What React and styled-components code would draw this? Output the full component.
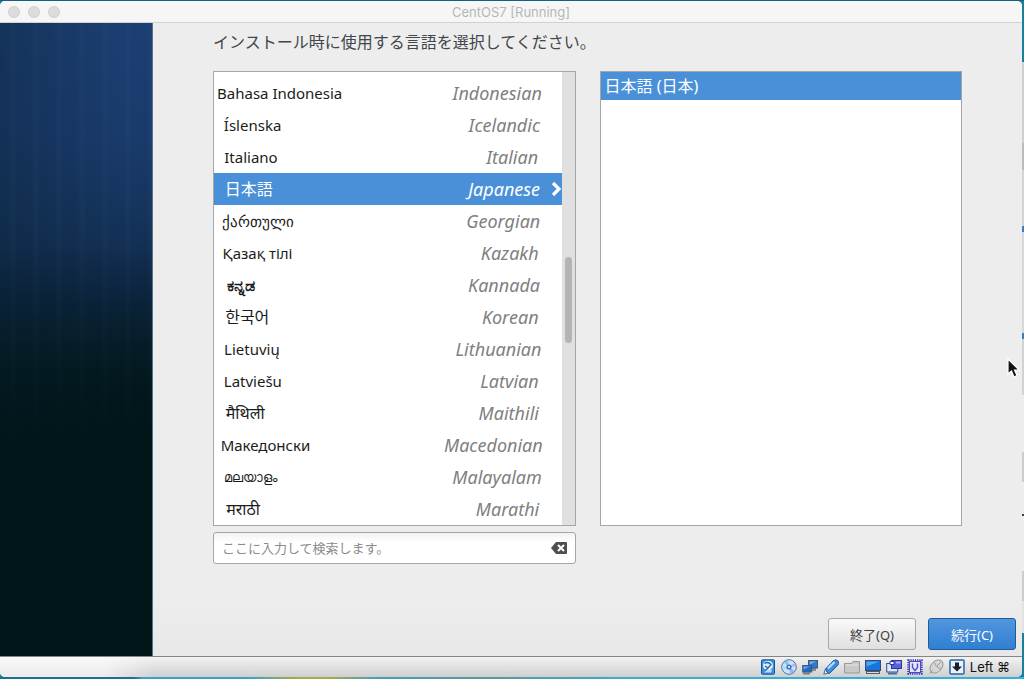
import React from "react";
import styled, { createGlobalStyle, css } from "styled-components";

const GlobalStyle = createGlobalStyle`
  * {
    box-sizing: border-box;
  }

  body {
    margin: 0;
    font-family: "Noto Sans", "Noto Sans CJK JP", sans-serif;
    color: #2e3436;
  }

  button,
  input {
    font-family: inherit;
  }
`;

const Desktop = styled.div`
  display: flex;
  min-height: 100vh;
  padding: 1px 2px 2px 0;
  background:
    linear-gradient(90deg, #1a7090 0 13%, #3aa0cc 14% 24%, #a9a94a 29% 32%, #4a9dbb 37%, #5a9a98 48%, #3fa9d0 60%, #35b0dc)
      bottom left / 100% 2px no-repeat,
    linear-gradient(#15607f, #15607f) top left / 100% 1px no-repeat,
    linear-gradient(#1b7e9c 0 62px, #d0d0d0 62px 143px, #bbb 143px 170px, #d4d4d4 170px 226px, #3d7cc4 226px 232px, #d8d8d8 232px 333px, #3d7cc4 333px 339px, #d2d2d2 339px 395px, #eee 395px 452px, #ccc 452px 482px, #eee 482px 514px, #4a3a2a 514px 516px, #eee 516px 571px, #ccc 571px 601px, #e2e2e2 601px 633px, #1b7e9c 633px);
`;

const Window = styled.div`
  flex: 1;
  display: flex;
  flex-direction: column;
  overflow: hidden;
  border-radius: 5px;
  background: #ededed;
`;

const TitleBar = styled.header`
  display: grid;
  grid-template-columns: 1fr auto 1fr;
  align-items: center;
  height: 22px;
  padding: 0 8px;
  border-bottom: 1px solid #d2d2d2;
  background: #f6f6f6;
`;

const WindowButtons = styled.div`
  display: flex;
  gap: 8px;
`;

const WindowButton = styled.button`
  width: 12px;
  height: 12px;
  padding: 0;
  border: 1px solid #d0d0d0;
  border-radius: 50%;
  background: #dcdcdc;
`;

const Title = styled.h1`
  margin: 0;
  font: 13px/20px Inter, "Liberation Sans", sans-serif;
  color: #b6b6b6;
`;

const Body = styled.div`
  flex: 1;
  display: flex;
`;

const Sidebar = styled.aside`
  flex: 0 0 153px;
  border-right: 1px solid #5d7088;
  background:
    linear-gradient(transparent 35%, #001518 70%),
    repeating-linear-gradient(90deg, transparent 0 9px, rgba(90, 150, 180, 0.04) 12px 14px, transparent 17px 23px),
    linear-gradient(90deg, rgba(10, 35, 55, 0.4), transparent 80%),
    linear-gradient(#1c3e72 0, #1a3a6c 18%, #15345c 30%, #10294a 42%, #0a2233 52%, #031a20 62%, #001518 70%);
`;

const Main = styled.main`
  flex: 1;
  display: flex;
  flex-direction: column;
  min-width: 0;
  background: linear-gradient(#ededed 90%, #e8e8e8);
`;

const Content = styled.section`
  flex: 1;
  display: flex;
  flex-direction: column;
  padding: 7px 60px 0;
`;

const Heading = styled.h2`
  margin: 0 0 17px;
  font-size: 16px;
  font-weight: 400;
  line-height: 24px;
  color: #41474a;
`;

const Columns = styled.div`
  flex: 1;
  display: grid;
  grid-template-columns: 1fr 1fr;
  grid-template-rows: 1fr auto;
  gap: 6px 24px;
`;

const panel = css`
  border: 1px solid #a6a6a6;
  background: #fff;
`;

const LanguagePanel = styled.div`
  ${panel}
  display: flex;
`;

const LanguageList = styled.ul`
  flex: 1;
  display: flex;
  flex-direction: column;
  justify-content: flex-end;
  margin: 0;
  padding: 5px 0 0;
  list-style: none;
`;

const LanguageRow = styled.button`
  display: flex;
  align-items: center;
  width: 100%;
  height: 32px;
  padding: 0;
  border: 0;
  background: ${(props) => (props.$selected ? "#4a90d9" : "transparent")};
  color: ${(props) => (props.$selected ? "#fff" : "#1c1c1c")};
`;

const scripts = {
  latin: "font-size: 15px;",
  cjk: "font-size: 16px;",
  indic: "font-size: 16px;",
  kannada: "font-size: 16px; font-weight: 600;",
  malayalam: "font-size: 13px;",
};

const NativeName = styled.span`
  display: grid;
  grid-template-columns: 1fr auto 9fr;
  width: 156px;
  ${(props) => scripts[props.$script]}
  line-height: 24px;
  white-space: nowrap;

  &::before {
    content: "";
  }
`;

const EnglishName = styled.span`
  display: grid;
  grid-template-columns: 9fr auto 1fr;
  width: 136px;
  margin-left: auto;
  font-size: 18px;
  font-style: italic;
  line-height: 24px;
  color: ${(props) => (props.$selected ? "#fff" : "#808080")};

  &::before {
    content: "";
  }
`;

const Arrow = styled.span`
  display: flex;
  justify-content: flex-end;
  width: 15px;
`;

const ScrollTrack = styled.div`
  display: flex;
  flex-direction: column;
  align-items: center;
  width: 13px;
  background: #e0e0e0;

  &::before {
    content: "";
    flex: 185;
  }

  &::after {
    content: "";
    flex: 182;
  }
`;

const ScrollThumb = styled.div`
  flex: 86;
  width: 7px;
  border-radius: 4px;
  background: #b2b4b5;
`;

const LocalePanel = styled.ul`
  ${panel}
  margin: 0;
  padding: 0;
  list-style: none;
`;

const LocaleRow = styled.button`
  width: 100%;
  height: 28px;
  padding: 0 4px;
  border: 0;
  background: #4a90d9;
  color: #fff;
  font-size: 16px;
  line-height: 24px;
  text-align: left;
`;

const SearchBox = styled.div`
  display: flex;
  align-items: center;
  height: 32px;
  padding: 0 8px;
  border: 1px solid #a6a6a6;
  border-radius: 3px;
  background: linear-gradient(#f2f2f2, #fff 30%);
`;

const SearchInput = styled.input`
  flex: 1;
  min-width: 0;
  padding: 0;
  border: 0;
  outline: 0;
  background: transparent;
  font-size: 13px;

  &::placeholder {
    color: #8b8b8b;
  }
`;

const ClearButton = styled.button`
  display: flex;
  padding: 0;
  border: 0;
  background: transparent;
`;

const Actions = styled.div`
  display: flex;
  justify-content: flex-end;
  gap: 12px;
  padding: 54px 6px 6px;
`;

const ActionButton = styled.button`
  width: 88px;
  height: 32px;
  padding: 0;
  border: 1px solid ${(props) => (props.$primary ? "#1f5a9c" : "#a8a8a8")};
  border-radius: 3px;
  background: ${(props) =>
    props.$primary ? "linear-gradient(#5296de, #2f7fd3)" : "linear-gradient(#fafafa, #dfdfdf)"};
  color: ${(props) => (props.$primary ? "#fff" : "#3c4245")};
  font-size: 13px;
`;

const StatusBar = styled.footer`
  display: flex;
  align-items: center;
  justify-content: flex-end;
  gap: 5px;
  height: 21px;
  padding: 0 12px 0 0;
  border-top: 1px solid #868686;
  background:
    linear-gradient(90deg, rgba(255, 255, 255, 0.6) 10%, transparent 15%),
    linear-gradient(#f2f2f2, #d0d0d0);
`;

const HostKey = styled.span`
  font: 13px/20px Inter, "DejaVu Sans", sans-serif;
  color: #111;
`;

const Pointer = styled.svg`
  position: absolute;
  top: 357px;
  right: 4px;
`;

const languages = [
  ["Bahasa Indonesia", "Indonesian"],
  ["Íslenska", "Icelandic"],
  ["Italiano", "Italian"],
  ["日本語", "Japanese", "cjk"],
  ["ქართული", "Georgian"],
  ["Қазақ тілі", "Kazakh"],
  ["ಕನ್ನಡ", "Kannada", "kannada"],
  ["한국어", "Korean", "cjk"],
  ["Lietuvių", "Lithuanian"],
  ["Latviešu", "Latvian"],
  ["मैथिली", "Maithili", "indic"],
  ["Македонски", "Macedonian"],
  ["മലയാളം", "Malayalam", "malayalam"],
  ["मराठी", "Marathi", "indic"],
];

function StatusIcon({ children, label }) {
  return (
    <svg width="16" height="16" viewBox="0 0 16 16" role="img" aria-label={label}>
      {children}
    </svg>
  );
}

function StatusIcons() {
  return (
    <>
      <StatusIcon label="Hard disks">
        <rect x="1.5" y=".8" width="13" height="14.400" rx="1" fill="#3f90dc" stroke="#17529c" />
        <ellipse cx="8" cy="6.500" rx="5" ry="4.800" fill="#dceefb" />
        <path d="M4.500 4.500Q8 2 11 5.500L8 9l-3 3M5 7l3 2" fill="none" stroke="#2466ad" strokeWidth="1.300" />
        <path d="M4 13.500l3-2.500h5l-1 2.500z" fill="#b9dcf7" />
      </StatusIcon>
      <StatusIcon label="Optical drives">
        <circle cx="8" cy="8" r="7.300" fill="#cfe0fa" stroke="#53749f" />
        <path d="M8 8L3 3.500a7 7 0 0 1 4-2.300z" fill="#7cc5f0" />
        <path d="M8 8l5.500 4a7 7 0 0 1-4 2.700z" fill="#8bb4f4" />
        <path d="M8 8l5.500-4 1.200 3z" fill="#c4a4ec" />
        <path d="M8 8l-6 3-.8-3.500z" fill="#9ee1e7" />
        <circle cx="8" cy="8" r="2.600" fill="#3478c8" />
        <circle cx="8" cy="8" r="1" fill="#fff" />
      </StatusIcon>
      <StatusIcon label="Network">
        <path d="M8 10.500h6" stroke="#8a8d92" strokeWidth="3" />
        <rect x="6.500" y="1.500" width="9" height="7.500" fill="#2a7ad8" stroke="#4a5668" />
        <path d="M7.500 2.500H14l-6 3z" fill="#6fb4f5" />
        <path d="M1 14.500h7" stroke="#7b7f85" strokeWidth="2" />
        <rect x=".7" y="6.500" width="9" height="6.500" fill="#1b6cd0" stroke="#4a5668" />
        <path d="M1.500 7.500H8l-6.500 3z" fill="#63aaf1" />
      </StatusIcon>
      <StatusIcon label="USB">
        <path d="M.8 15.200l1.500-5 4 3.600z" fill="#e8f2fb" stroke="#567" />
        <path d="M2.500 10L10 2q3-2.500 5 0t-1 5l-7.500 7.500q-3-.5-4-4.500z" fill="#3b8de0" stroke="#205ca5" />
        <path d="M5 9.500l6.500-6.500" stroke="#b7defb" strokeWidth="2.200" />
      </StatusIcon>
      <StatusIcon label="Shared folders">
        <path d="M.5 14V4.500h7l1.500-2h6.500V14z" fill="#c9c9c9" stroke="#999" />
        <path d="M1.500 6h13" stroke="#e3e3e3" />
      </StatusIcon>
      <StatusIcon label="Display">
        <rect x=".5" y="1.500" width="15" height="10" fill="#1476dc" stroke="#354a70" />
        <path d="M1.500 2.500h13l-13 5z" fill="#4da5f3" />
        <path d="M1 13.500h14" stroke="#565b63" strokeWidth="3" />
        <path d="M2 13.500h12" stroke="#ddd" />
      </StatusIcon>
      <StatusIcon label="Recording">
        <rect x=".7" y="4.500" width="11" height="8.500" fill="#dce9fa" stroke="#284b9b" />
        <path d="M2 14.500h9" stroke="#506c9b" strokeWidth="2" />
        <rect x="5.500" y="1.500" width="10" height="8" fill="#5a63d6" stroke="#3036a0" />
        <path d="M4 2.500h4v3H4z" fill="#fff" stroke="#3036a0" />
        <path d="M10 3.500h4.500" stroke="#a9aefc" strokeWidth="2" />
      </StatusIcon>
      <StatusIcon label="Processor">
        <rect x="1.300" y="1.300" width="13.400" height="13.400" fill="none" stroke="#3635b4" strokeWidth="2" strokeDasharray="1.200 1" />
        <rect x="2.500" y="2.500" width="11" height="11" fill="#e5e6ff" stroke="#4947c4" />
        <path d="M5.500 4.500v4l2.500 3 2.500-3v-4" fill="none" stroke="#5553c7" strokeWidth="1.500" />
      </StatusIcon>
      <StatusIcon label="Mouse integration">
        <ellipse cx="8.500" cy="7.500" rx="5.300" ry="7.500" transform="rotate(45 8.500 7.500)" fill="#d6d6d6" stroke="#999" />
        <path d="M6.500 3.500q1 5 6.500 6M9 7l4-4M1.500 14.500l3-3" fill="none" stroke="#999" />
      </StatusIcon>
      <StatusIcon label="Keyboard capture">
        <rect x="1" y="1" width="14" height="14" rx="1" fill="#e7f2ff" stroke="#2b62a5" strokeWidth="1.500" />
        <path d="M6 3.500h4v4h3L8 12.500 3 7.500h3z" fill="#17202b" />
      </StatusIcon>
    </>
  );
}

function LanguageChooser() {
  return (
    <Columns>
      <LanguagePanel>
        <LanguageList>
          {languages.map(([native, english, script = "latin"]) => {
            const selected = english === "Japanese";
            return (
              <li key={english}>
                <LanguageRow type="button" $selected={selected} aria-pressed={selected}>
                  <NativeName $script={script}>
                    <span>{native}</span>
                  </NativeName>
                  <EnglishName $selected={selected}>
                    <span>{english}</span>
                  </EnglishName>
                  <Arrow>
                    {selected && (
                      <svg width="11" height="16" viewBox="0 0 11 16" aria-hidden="true">
                        <path d="M2 2l6 6-6 6" fill="none" stroke="#fff" strokeWidth="3.200" />
                      </svg>
                    )}
                  </Arrow>
                </LanguageRow>
              </li>
            );
          })}
        </LanguageList>
        <ScrollTrack>
          <ScrollThumb />
        </ScrollTrack>
      </LanguagePanel>
      <LocalePanel>
        <li>
          <LocaleRow type="button">日本語 (日本)</LocaleRow>
        </li>
      </LocalePanel>
      <SearchBox>
        <SearchInput type="text" aria-label="言語の検索" placeholder="ここに入力して検索します。" />
        <ClearButton type="button" aria-label="クリア">
          <svg width="16" height="12" viewBox="0 0 16 12">
            <path d="M0 6l5-6h10q1 0 1 1v10q0 1-1 1H5z" fill="#4b5052" />
            <path d="M7 3l6 6M13 3L7 9" stroke="#fff" strokeWidth="2" />
          </svg>
        </ClearButton>
      </SearchBox>
    </Columns>
  );
}

function App() {
  return (
    <Desktop>
      <GlobalStyle />
      <Window>
        <TitleBar>
          <WindowButtons>
            <WindowButton type="button" aria-label="Close" />
            <WindowButton type="button" aria-label="Minimize" />
            <WindowButton type="button" aria-label="Zoom" />
          </WindowButtons>
          <Title>CentOS7 [Running]</Title>
        </TitleBar>
        <Body>
          <Sidebar />
          <Main>
            <Content>
              <Heading>インストール時に使用する言語を選択してください。</Heading>
              <LanguageChooser />
            </Content>
            <Actions>
              <ActionButton type="button">終了(Q)</ActionButton>
              <ActionButton type="button" $primary>
                続行(C)
              </ActionButton>
            </Actions>
          </Main>
        </Body>
        <StatusBar>
          <StatusIcons />
          <HostKey>Left ⌘</HostKey>
        </StatusBar>
      </Window>
      <Pointer width="14" height="22" viewBox="0 0 14 22" aria-hidden="true">
        <path d="M2 2v15l3.500-3 2.500 6 3-1.500-2.500-5.500H13z" fill="#111" stroke="#fff" strokeWidth="1.200" />
      </Pointer>
    </Desktop>
  );
}

export default App;
